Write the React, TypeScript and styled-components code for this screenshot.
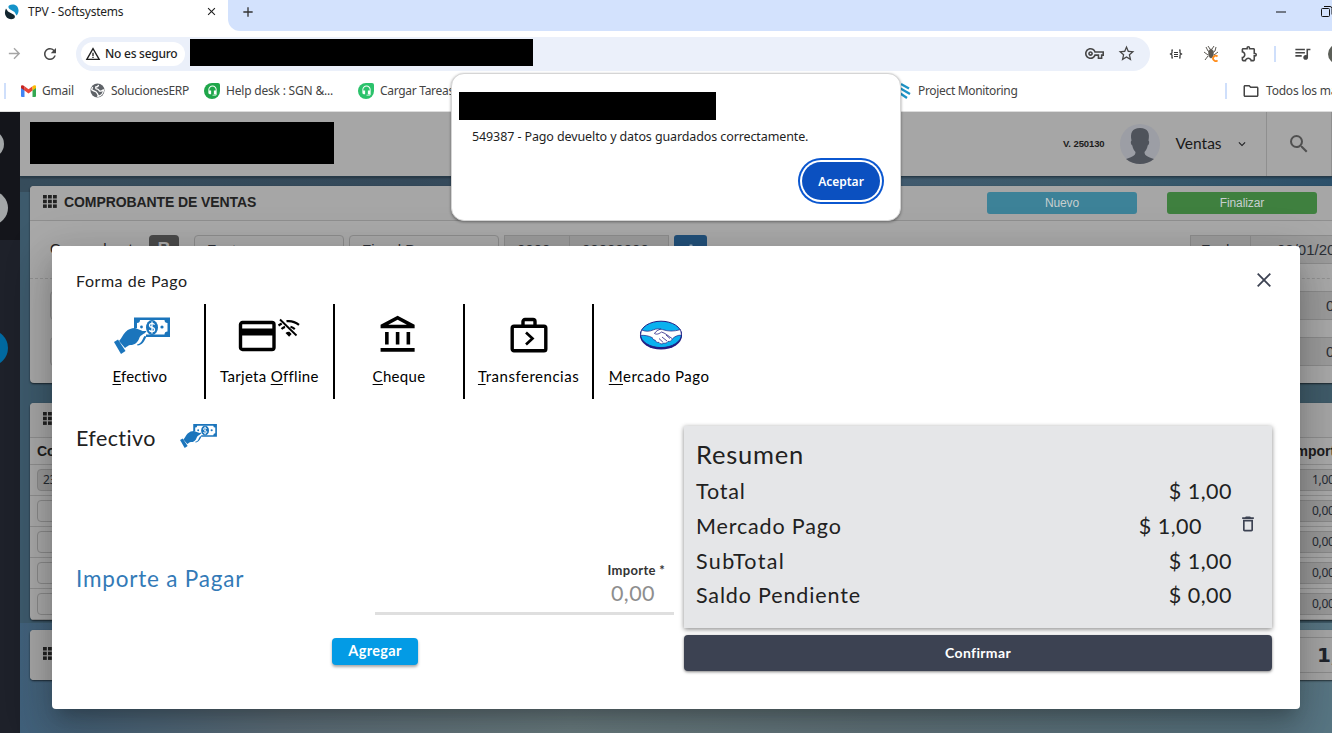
import React from 'react';
import styled, { createGlobalStyle } from 'styled-components';
import {
  MdOutlineAccountBalance,
  MdOutlineDelete,
  MdOutlineExtension,
  MdOutlineFolder,
  MdOutlineQueueMusic,
  MdOutlineVpnKey,
  MdStarBorder,
  MdSearch,
  MdRefresh,
  MdArrowForward,
  MdWarningAmber,
  MdAdd,
  MdClose,
  MdExpandMore,
  MdHeadsetMic,
  MdSettings,
} from 'react-icons/md';

const brand = '"Lato", sans-serif';
const system = '"Noto Sans", "Open Sans", sans-serif';
const classic = '"Liberation Sans", Arial, sans-serif';

const GlobalStyle = createGlobalStyle`
  * { box-sizing: border-box; }
  html, body { margin: 0; padding: 0; overflow: hidden; }
  body { font-family: ${classic}; color: #202124; }
  svg { display: block; flex: none; }
`;

const Screen = styled.div`
  position: relative;
  width: 1332px;
  height: 733px;
  overflow: hidden;
  display: flex;
  flex-direction: column;
  background: #fff;
`;

/* Browser chrome */
const TabStrip = styled.div`
  display: flex;
  height: 31px;
  flex: none;
`;
const ActiveTab = styled.div`
  width: 228px;
  display: flex;
  align-items: center;
  padding: 0 10px 8px 4px;
  font: 12px ${system};
  letter-spacing: -0.23px;
  color: #1f1f1f;
`;
const TabTitle = styled.span`
  margin-left: 8px;
  flex: 1;
`;
const StripRest = styled.div`
  flex: 1;
  background: #d3e2fd;
  border-radius: 0 0 0 12px;
  display: flex;
  align-items: center;
  padding: 0 0 8px 12px;
  color: #333;
`;
const WindowButtons = styled.div`
  display: flex;
  align-items: center;
  gap: 34px;
  margin-left: auto;
  margin-right: -2px;
`;
const Toolbar = styled.div`
  display: flex;
  align-items: center;
  height: 45px;
  flex: none;
  color: #474747;
`;
const NavIcon = styled.div<{ $w: number; $faded?: boolean }>`
  width: ${p => p.$w}px;
  flex: none;
  display: flex;
  justify-content: center;
  color: ${p => (p.$faded ? '#a5a5a5' : '#474747')};
`;
const AddressBar = styled.div`
  width: 1074px;
  height: 34px;
  margin-left: 4px;
  flex: none;
  border-radius: 17px;
  background: #ebf0fa;
  display: flex;
  align-items: center;
  padding: 0 14px 0 5px;
`;
const SecurityChip = styled.div`
  width: 104px;
  height: 24px;
  margin-right: 5px;
  border-radius: 12px;
  background: #fff;
  display: flex;
  align-items: center;
  gap: 4px;
  padding-left: 4px;
  font: 500 12px ${system};
  letter-spacing: -0.25px;
  color: #1f1f1f;
  white-space: nowrap;
  flex: none;
`;
const Redacted = styled.div<{ $w: number; $h: number; $lift?: number }>`
  width: ${p => p.$w}px;
  height: ${p => p.$h}px;
  margin-bottom: ${p => p.$lift ?? 0}px;
  background: #000;
  flex: none;
`;
const AddressActions = styled.div`
  margin-left: auto;
  display: flex;
  align-items: center;
  gap: 13px;
`;
const Extensions = styled.div`
  display: flex;
  align-items: center;
  padding-left: 17px;
`;
const Divider = styled.i<{ $after?: number }>`
  width: 2px;
  height: 16px;
  margin-right: ${p => p.$after ?? 0}px;
  background: #cfdffb;
  flex: none;
`;
const Bookmarks = styled.div`
  height: 36px;
  flex: none;
  display: flex;
  align-items: center;
  padding: 0 0 6px 4px;
  border-bottom: 1px solid #dcdcdc;
  font: 12px ${system};
  color: #444;
  white-space: nowrap;
`;
const Bookmark = styled.div<{ $w: number; $gap?: number; $ls?: number }>`
  width: ${p => p.$w}px;
  display: flex;
  align-items: center;
  gap: ${p => p.$gap ?? 6}px;
  letter-spacing: ${p => p.$ls ?? 0}px;
  flex: none;
`;
const Leaf = styled.div<{ $c: string }>`
  width: 16px;
  height: 16px;
  border-radius: 8px 2px 8px 8px;
  background: ${p => p.$c};
  color: #fff;
  display: flex;
  align-items: center;
  justify-content: center;
`;

/* Application, dimmed behind the dialog */
const AppArea = styled.div`
  display: flex;
  flex: 1;
  min-height: 0;
`;
const Sidebar = styled.div`
  width: 20px;
  background: linear-gradient(#14151b 0 128px, #1e212a 128px);
  overflow: hidden;
  display: flex;
  flex-direction: column;
  align-items: flex-end;
  flex: none;
`;
const SideBadge = styled.div<{ $size: number; $top: number; $right: number; $bg: string }>`
  width: ${p => p.$size}px;
  height: ${p => p.$size}px;
  margin: ${p => p.$top}px ${p => p.$right}px 0 0;
  border-radius: 50%;
  background: ${p => p.$bg};
  flex: none;
`;
const Main = styled.div`
  flex: 1;
  min-width: 0;
  overflow: hidden;
  background:
    linear-gradient(90deg, #364c5b 0%, #34495a 30%, #415a6e 66%, #3c5b6b 82%, #2c506a 100%) 0 0 / 100% 80px no-repeat,
    linear-gradient(90deg, #41617b 0%, #60727d 20%, #6d8084 42%, #64777e 65%, #587684 100%) 0 100% / 100% 110px no-repeat,
    linear-gradient(90deg, #3d5a6c, #405c6a);
`;
const AppHeader = styled.div`
  height: 65px;
  background: #a6a6a6;
  border-bottom: 1px solid #263a48;
  display: flex;
  align-items: center;
  padding-left: 10px;
  box-shadow: 0 1px 2px rgba(0, 0, 0, 0.3);
`;
const Version = styled.b`
  margin-left: 729px;
  font-size: 9.5px;
  letter-spacing: -0.1px;
  width: 58px;
  padding-bottom: 2px;
  color: #1c1c1c;
  white-space: nowrap;
`;
const UserName = styled.span`
  font: 15.5px ${brand};
  width: 61px;
  margin-left: 16px;
  padding-bottom: 2px;
  color: #191919;
`;
const SearchBox = styled.div`
  height: 64px;
  width: 66px;
  margin-left: 17px;
  border: solid #8f8f8f;
  border-width: 0 1px;
  display: flex;
  align-items: center;
  justify-content: center;
  color: #505050;
  flex: none;
`;
const Panels = styled.div`
  padding: 9px 0 0 10px;
  width: 1400px;
`;
const Panel = styled.section<{ $h: number; $gap: number }>`
  height: ${p => p.$h}px;
  margin-bottom: ${p => p.$gap}px;
  border-radius: 4px;
  background: #a9a9a9;
  box-shadow: 0 1px 2px rgba(0, 0, 0, 0.6);
  overflow: hidden;
`;
const PanelHead = styled.div<{ $h?: number }>`
  height: ${p => p.$h ?? 35}px;
  display: flex;
  align-items: center;
  padding: 0 0 3px 13px;
  background: #a6a6a6;
  border-bottom: ${p => (p.$h ? 0 : 1)}px solid #8f8f8f;
  font: bold 14px ${classic};
  letter-spacing: -0.09px;
  color: #222;
`;
const PanelTitle = styled.span`
  margin: 1px 0 0 7px;
  width: 923px;
`;
const PanelButton = styled.div<{ $bg: string }>`
  width: 150px;
  height: 22px;
  margin: 3px 30px 0 0;
  border-radius: 3px;
  background: ${p => p.$bg};
  color: #c7cfcf;
  font: 12px/22px ${classic};
  text-align: center;
`;
const FormRow = styled.div<{ $h: number; $top: number; $dash?: boolean }>`
  height: ${p => p.$h}px;
  padding: ${p => p.$top}px 0 0 20px;
  display: flex;
  align-items: flex-start;
  border-bottom: ${p => (p.$dash ? '1px dashed #929292' : '0')};
`;
const FormLabel = styled.span`
  width: 99px;
  font: 15px/28px ${classic};
  color: #222;
`;
const Letter = styled.div`
  width: 30px;
  height: 29px;
  margin-right: 15px;
  border-radius: 4px;
  background: #4a4a4a;
  color: #a9a9a9;
  font: bold 18px/29px ${classic};
  text-align: center;
`;
const Field = styled.div<{ $w: number; $ml?: number; $flat?: boolean; $pad?: number }>`
  width: ${p => p.$w}px;
  height: 29px;
  margin-left: ${p => p.$ml ?? 0}px;
  padding-left: ${p => p.$pad ?? 12}px;
  border: 1px solid #8c8c8c;
  border-radius: ${p => (p.$flat ? 0 : 4)}px;
  background: ${p => (p.$flat ? '#9c9c9c' : '#a8a8a8')};
  color: #2b2f36;
  font: 15px/28px ${classic};
  flex: none;
`;
const LookupButton = styled.div`
  width: 33px;
  height: 29px;
  margin-left: 5px;
  border-radius: 3px;
  background: #225079;
  color: #8fa4b5;
  display: flex;
  justify-content: center;
  padding-top: 8px;
`;
const ColumnHead = styled.div`
  height: 27px;
  display: flex;
  justify-content: space-between;
  padding: 0 77px 0 7px;
  border-bottom: 1px solid #8f8f8f;
  font: bold 14px/26px ${classic};
  color: #1d1d1d;
`;
const GridRow = styled.div`
  height: 31px;
  display: flex;
  justify-content: space-between;
  align-items: center;
  padding: 0 60px 0 7px;
  border-bottom: 1px solid #8f8f8f;
`;
const Cell = styled.div<{ $filled?: boolean; $pad: number }>`
  width: 160px;
  height: 22px;
  border: 1px solid #898989;
  border-radius: 4px;
  background: ${p => (p.$filled ? '#999' : '#a8a8a8')};
  padding-left: ${p => p.$pad}px;
  font: 12px/20px ${system};
  letter-spacing: -0.3px;
  color: #262b33;
`;
const TotalBox = styled.div`
  margin: 3px 0 0 1200px;
  width: 130px;
  height: 36px;
  flex: none;
  border: 1px solid #8c8c8c;
  padding-left: 59px;
  font: bold 20px/34px "DejaVu Sans", sans-serif;
  color: #20242c;
`;

/* Payment dialog */
const Modal = styled.div`
  position: absolute;
  left: 52px;
  top: 246px;
  width: 1248px;
  height: 463px;
  padding: 24px 28px 0 24px;
  background: #fff;
  border-radius: 4px;
  box-shadow: 0 11px 15px -7px rgba(0, 0, 0, 0.2), 0 24px 38px 3px rgba(0, 0, 0, 0.14),
    0 9px 46px 8px rgba(0, 0, 0, 0.12);
  font-family: ${brand};
  color: #212121;
`;
const ModalHead = styled.div`
  display: flex;
  justify-content: space-between;
  height: 34px;
  font-size: 16px;
  line-height: 22px;
  letter-spacing: 0.55px;
`;
const CloseIcon = styled.div`
  padding: 3px 1px 0 0;
  color: #3c4252;
`;
const Methods = styled.div`
  display: flex;
  height: 95px;
`;
const Method = styled.div`
  width: 129.6px;
  display: flex;
  flex-direction: column;
  align-items: center;
  border-right: 2px solid #000;
  color: #000;
  &:last-child { border-right: 0; }
`;
const MethodIcon = styled.div<{ $shift?: number }>`
  height: 62px;
  padding-left: ${p => p.$shift ?? 0}px;
  display: flex;
  align-items: center;
`;
const MethodLabel = styled.div<{ $ls: number }>`
  font-size: 15px;
  line-height: 20px;
  letter-spacing: ${p => p.$ls}px;
  white-space: nowrap;
  u { text-underline-offset: 2px; text-decoration-thickness: 1px; text-decoration-skip-ink: none; }
`;
const ModalBody = styled.div`
  display: flex;
  padding-top: 26px;
`;
const PayColumn = styled.div`
  width: 608px;
`;
const Chosen = styled.div`
  display: flex;
  align-items: center;
  gap: 24px;
  height: 25px;
  font-size: 21.5px;
  letter-spacing: 0.4px;
  svg { margin-bottom: 4px; }
`;
const AmountRow = styled.div`
  display: flex;
  margin-top: 112px;
  height: 53px;
`;
const AmountLabel = styled.div`
  width: 299px;
  padding-top: 4px;
  font-size: 22.5px;
  line-height: 26px;
  letter-spacing: 0.8px;
  color: #337ab7;
`;
const AmountField = styled.div`
  width: 299px;
  border-bottom: 3px solid #dfdfdf;
  display: flex;
  flex-direction: column;
  align-items: flex-end;
`;
const AmountCaption = styled.span`
  font: bold 13px/16px ${brand};
  letter-spacing: 0.3px;
  padding-right: 9px;
  color: #333;
`;
const AmountValue = styled.span`
  font-size: 21.5px;
  line-height: 28px;
  letter-spacing: 0.45px;
  padding: 1px 19px 0 0;
  color: #8e8e8e;
`;
const AddButton = styled.div`
  width: 86px;
  height: 27px;
  margin: 23px 0 0 256px;
  border-radius: 4px;
  background: #039be5;
  color: #fff;
  font: bold 14.5px/26px ${brand};
  letter-spacing: 0.35px;
  text-align: center;
  box-shadow: 0 2px 3px rgba(0, 0, 0, 0.35);
`;
const SummaryColumn = styled.div`
  width: 588px;
`;
const Summary = styled.div`
  height: 202px;
  margin-top: 1px;
  padding: 11px 40px 0 12px;
  background: #e5e6e8;
  box-shadow: 0 2px 5px rgba(0, 0, 0, 0.35), 0 0 4px rgba(0, 0, 0, 0.15);
`;
const SummaryTitle = styled.div`
  font-size: 25.5px;
  line-height: 34px;
  height: 37px;
  letter-spacing: 0.8px;
`;
const SummaryRow = styled.div`
  height: 34.7px;
  display: flex;
  align-items: center;
  justify-content: space-between;
  font-size: 21.5px;
  letter-spacing: 0.5px;
`;
const SummaryLabel = styled.span<{ $ls?: number }>`
  letter-spacing: ${p => p.$ls ?? 0.85}px;
`;
const Removable = styled.span`
  display: flex;
  align-items: center;
  gap: 36px;
  margin-right: -26px;
  svg { color: #3c4252; margin-bottom: 4px; }
`;
const ConfirmButton = styled.div`
  height: 36px;
  margin-top: 7px;
  border-radius: 4px;
  background: #3c4252;
  color: #fff;
  font: bold 14px/35px ${brand};
  letter-spacing: 0.35px;
  text-align: center;
  box-shadow: 0 1px 3px rgba(0, 0, 0, 0.5);
`;

/* Browser alert */
const Alert = styled.div`
  position: absolute;
  left: 451px;
  top: 73px;
  width: 450px;
  height: 148px;
  padding: 18px 20px 0 7px;
  border: 1px solid #d5d5d5;
  border-radius: 13px;
  background: #fff;
  box-shadow: 0 1px 3px rgba(0, 0, 0, 0.4);
  display: flex;
  flex-direction: column;
`;
const AlertText = styled.div`
  padding: 8px 0 0 13px;
  font: 12.5px/18px ${system};
  letter-spacing: -0.11px;
  color: #1f1f1f;
  white-space: nowrap;
`;
const AcceptButton = styled.div`
  align-self: flex-end;
  width: 78px;
  height: 38px;
  margin-top: 16px;
  border-radius: 19px;
  background: #0b50c0;
  color: #fff;
  font: 600 12px/39px ${system};
  text-align: center;
  box-shadow: 0 0 0 2px #fff, 0 0 0 4px #0b57d0;
`;

const CashHand = ({ width, height }: { width: number; height: number }) => (
  <svg width={width} height={height} viewBox="0 0 56 38" fill="#1b75bc">
    <path fillRule="evenodd" d="M20 1.500h36v19.500H32V18.500h18.500a3 3 0 0 1 3-3V7a3 3 0 0 1-3-3H26a3 3 0 0 1-3 3v5l-3 1z" />
    <circle cx="27.500" cy="11" r="1.400" />
    <circle cx="48" cy="11" r="1.600" />
    <ellipse cx="38" cy="11.500" rx="6" ry="7.500" />
    <path d="M40.500 8.800c-.5-1-1.300-1.400-2.500-1.400-3.400 0-3.200 3.500 0 4 3.400.6 3.300 4.200 0 4.200-1.300 0-2.200-.5-2.700-1.500M38 5.500v12" fill="none" stroke="#fff" strokeWidth="1.300" />
    <path d="M5 25c3-3 3.500-6 6.500-9 3-3 6-4 9.500-4l6.500 2.500c2 1.500 4-.5 5 1-2 2.500-6 3.500-7 6-1.500 5-5 7.500-9 7.500-2 0-4 2-5.500 3z" />
    <path d="M23 28.500c5-1 5-5 7.500-8.500l2 .5c-2.500 5-4 8.500-9 9z" />
    <path d="M0 26l4-2.500 7.500 11.500-4.500 3z" />
  </svg>
);

const CardOffline = () => (
  <svg width="62" height="34" viewBox="0 0 62 34" fill="none" stroke="#000">
    <rect x="2.500" y="4.500" width="33.500" height="27" rx="2" strokeWidth="3.400" />
    <path d="M1.500 14h35" strokeWidth="7" />
    <path d="M42 1.500l16.500 16" strokeWidth="1.800" />
    <path d="M48.500 3.200c4.500-.6 8.700.6 12.500 3.600M40.500 7.500l3.200-2M43.500 11c1-.9 2.200-1.700 3.500-2.100M52.500 8.800c1.600.4 3 1.200 4.300 2.300" strokeWidth="2.200" />
    <path d="M47.500 15c1.400-1.100 2.700-1.400 4.200-1.100l1.900 2-2.500 2.800z" fill="#000" stroke="none" />
  </svg>
);

const TransferCase = () => (
  <svg width="38" height="36" viewBox="0 0 38 36" fill="none" stroke="#000" strokeWidth="3.400">
    <rect x="2.200" y="9.200" width="33.600" height="24.600" rx="1.800" />
    <path d="M13 9V4.500a2 2 0 0 1 2-2h8a2 2 0 0 1 2 2V9" />
    <path d="M16 15.500l6.500 6-6.500 6" strokeWidth="2.700" />
  </svg>
);

const Handshake = () => (
  <svg width="44" height="30" viewBox="0 0 44 30">
    <ellipse cx="22" cy="15.800" rx="21" ry="13.700" fill="#211c82" />
    <ellipse cx="22" cy="14.400" rx="20.500" ry="13.200" fill="#0ab1ef" stroke="#211c82" strokeWidth="1" />
    <path d="M2.500 10c4.500 1.800 8 1.600 12-.2 3-1.300 6-1.200 9-.2 6 1.900 11 2 18 0l1 5.500c-4 0-6.500 1.400-9 3.600-1 2.500-3 3-4.500 2.700-1 1.700-2.800 2.200-4.200 1.700-1.800 1.400-4 .9-4.800-.7-2.500.3-3.500-1-3.700-2.200-2-.2-2.800-1.300-2.800-2.400C9.500 15.500 6 15.300 1.500 15.300z" fill="#fff" stroke="#211c82" strokeWidth=".7" />
    <path d="M22 9c-3 1-5 2-6.500 4.500 2.500 1.500 5 0 7-1.500 3.500 1 7 4 10.500 6.500M23 17l5 4M20 18.500l4 3.800M27 15l4 3.500" fill="none" stroke="#211c82" strokeWidth=".8" />
  </svg>
);

const SoftMark = () => (
  <svg width="16" height="16" viewBox="0 0 16 16">
    <path d="M5 1.500C8-.5 14 0 14.500 6c.2 2-.5 4-2 5.500L10.500 8 5.500 5C4.300 4 4 2.500 5 1.500z" fill="#1593c9" />
    <path d="M2 4.500L4 7.500l5.500 3c1.800 1.200 1.800 3 .5 4C6 16.500 1.500 14 1 9.500.8 7.500 1.200 6 2 4.500z" fill="#13262f" />
  </svg>
);

const Globe = () => (
  <svg width="15" height="15" viewBox="0 0 15 15">
    <circle cx="7.500" cy="7.500" r="7" fill="#5f6368" />
    <path d="M8.500 1.800c-.3 1.800-1 2.200-2.700 2.200-.3 1.500.2 2 1.700 2.200 1.800.3 1.200 2 3 2 1.200 0 1.500-1.200 3-1.200-.2 2.800-2.300 5.800-5.500 6.300.6-1.700-.6-2.300-1-3.300-.5-1.600-2.500-1.200-5.300-3.200.2-1 .5-1.800 1-2.600" fill="none" stroke="#fff" strokeWidth="1.300" />
  </svg>
);

const Gmail = () => (
  <svg width="15" height="12" viewBox="0 0 15 12">
    <path d="M0 1.500l3.500 2.600V12H1a1 1 0 0 1-1-1z" fill="#4285f4" />
    <path d="M15 1.500l-3.500 2.600V12H14a1 1 0 0 0 1-1z" fill="#34a853" />
    <path d="M3.500 1.200l4 3 4-3v4.300l-4 3-4-3z" fill="#ea4335" />
    <path d="M0 3V1.500C0 .2 1.500-.5 3.500 1.200v4.300z" fill="#c5221f" />
    <path d="M15 3V1.500c0-1.300-1.500-2-3.500-.3v4.300z" fill="#fbbc04" />
  </svg>
);

const MonitorMark = () => (
  <svg width="14" height="16" viewBox="0 0 14 16" fill="none" stroke="#1e93c6" strokeWidth="2.300">
    <path d="M4 1l8 4.500M1 4l12 7M2 9.500l8 5.500" />
  </svg>
);

const GridGlyph = () => (
  <svg width="14" height="13" viewBox="0 0 14 13" fill="#222">
    {[0, 5, 10].map(x => [0, 4.7, 9.4].map(y => <rect key={`${x}-${y}`} x={x} y={y} width="3.800" height="3.500" />))}
  </svg>
);

const Avatar = () => (
  <svg width="40" height="40" viewBox="0 0 40 40">
    <circle cx="20" cy="20" r="20" fill="#9c9ea5" />
    <path d="M11.500 16.500C10 9 12 4 20 4s10 5 8.500 12.500c1.200 1 .8 4-.8 5-.5 3-1.700 5-3.200 6.500 0 4 3 4.500 9.500 7-4 3.500-9 5-14 5s-10-1.500-14-5c6.500-2.500 9.500-3 9.500-7-1.500-1.500-2.700-3.500-3.200-6.500-1.600-1-2-4-.8-5z" fill="#4f535b" />
  </svg>
);

const amounts = ['1,00', '0,00', '0,00', '0,00', '0,00'];

export default function App() {
  return (
    <>
      <GlobalStyle />
      <Screen>
        <TabStrip>
          <ActiveTab>
            <SoftMark />
            <TabTitle>TPV - Softsystems</TabTitle>
            <MdClose size={13} />
          </ActiveTab>
          <StripRest>
            <MdAdd size={16} />
            <WindowButtons>
              <svg width="12" height="2"><path d="M1 1h10" stroke="#111" /></svg>
              <svg width="13" height="11" fill="none" stroke="#111"><rect x=".5" y="2.500" width="8" height="8" rx="1" /><path d="M3 .5h6a2 2 0 0 1 2 2v6" /></svg>
            </WindowButtons>
          </StripRest>
        </TabStrip>

        <Toolbar>
          <NavIcon $w={28} $faded><MdArrowForward size={17} /></NavIcon>
          <NavIcon $w={44}><MdRefresh size={18} /></NavIcon>
          <AddressBar>
            <SecurityChip><MdWarningAmber size={16} />No es seguro</SecurityChip>
            <Redacted $w={343} $h={27} $lift={2} />
            <AddressActions><MdOutlineVpnKey size={19} /><MdStarBorder size={19} /></AddressActions>
          </AddressBar>
          <Extensions>
            <NavIcon $w={18}>
              <svg width="14" height="10" fill="none" stroke="#333" strokeWidth="1.200">
                <path d="M4 1H3v3L1.500 5 3 6v3h1M10 1h1v3l1.500 1L11 6v3h-1M5 3.500h4M5 5.500h4M5 7.500h4" />
              </svg>
            </NavIcon>
            <NavIcon $w={54}>
              <svg width="16" height="16" viewBox="0 0 16 16" fill="none" stroke="#5b5852">
                <path d="M2 1l2 4 3 2M12 1l-1 4-3 2M0 6l4 3M14 6l-4 3M1 14l3-4M4 0l2 3M10 0L8 3" />
                <ellipse cx="7" cy="7.500" rx="2.200" ry="4.300" fill="#5b5852" />
                <path d="M13.500 10.500a2.600 2.600 0 1 0 0 3.800" stroke="#ff8c1a" strokeWidth="1.800" />
              </svg>
            </NavIcon>
            <NavIcon $w={20}><MdOutlineExtension size={19} /></NavIcon>
            <NavIcon $w={32}><Divider /></NavIcon>
            <NavIcon $w={22}><MdOutlineQueueMusic size={19} /></NavIcon>
            <NavIcon $w={50}>
              <svg width="20" height="20"><circle cx="10" cy="10" r="10" fill="#5c5f58" /></svg>
            </NavIcon>
          </Extensions>
        </Toolbar>

        <Bookmarks>
          <Divider $after={15} />
          <Bookmark $w={69} $ls={-0.2}><Gmail />Gmail</Bookmark>
          <Bookmark $w={114} $gap={6} $ls={-0.3}><Globe />SolucionesERP</Bookmark>
          <Bookmark $w={154} $ls={-0.2}><Leaf $c="#1fa64a"><MdHeadsetMic size={11} /></Leaf>Help desk : SGN &amp;...</Bookmark>
          <Bookmark $w={539} $ls={-0.3}><Leaf $c="#2bc26b"><MdHeadsetMic size={11} /></Leaf>Cargar Tareas</Bookmark>
          <Bookmark $w={328} $gap={7} $ls={-0.33}><MonitorMark />Project Monitoring</Bookmark>
          <Divider $after={15} />
          <Bookmark $w={100} $ls={-0.2}><MdOutlineFolder size={18} />Todos los marcadores</Bookmark>
        </Bookmarks>

        <AppArea>
          <Sidebar>
            <SideBadge $size={28} $top={18} $right={16} $bg="radial-gradient(#226f8c 45%, #a3a6a8 50%)" />
            <SideBadge $size={34} $top={33} $right={12} $bg="#a3a6a8" />
            <SideBadge $size={36} $top={105} $right={12} $bg="#0069a0" />
          </Sidebar>
          <Main>
            <AppHeader>
              <Redacted $w={304} $h={42} $lift={2} />
              <Version>V. 250130</Version>
              <Avatar />
              <UserName>Ventas</UserName>
              <MdExpandMore size={14} />
              <SearchBox><MdSearch size={24} /></SearchBox>
            </AppHeader>
            <Panels>
              <Panel $h={197} $gap={20}>
                <PanelHead>
                  <GridGlyph />
                  <PanelTitle>COMPROBANTE DE VENTAS</PanelTitle>
                  <PanelButton $bg="#3d8298">Nuevo</PanelButton>
                  <PanelButton $bg="#3f803f">Finalizar</PanelButton>
                </PanelHead>
                <FormRow $h={58} $top={14} $dash>
                  <FormLabel>Comprobante</FormLabel>
                  <Letter>B</Letter>
                  <Field $w={150}>Factura</Field>
                  <Field $w={150} $ml={5}>Fiscal B</Field>
                  <Field $w={66} $ml={5} $flat>0000</Field>
                  <Field $w={100} $ml={-1} $flat>00000000</Field>
                  <LookupButton><MdSettings size={14} /></LookupButton>
                  <Field $w={61} $ml={483} $flat $pad={10}>Fecha</Field>
                  <Field $w={130} $ml={-1} $flat $pad={26}>08/01/2025</Field>
                </FormRow>
                <FormRow $h={46} $top={12}>
                  <Field $w={200} />
                  <Field $w={290} $ml={860} $flat $pad={215}>0,00</Field>
                </FormRow>
                <FormRow $h={46} $top={12}>
                  <Field $w={200} />
                  <Field $w={290} $ml={860} $flat $pad={215}>0,00</Field>
                </FormRow>
              </Panel>

              <Panel $h={217} $gap={10}>
                <PanelHead><GridGlyph /></PanelHead>
                <ColumnHead><span>Cod.</span><span>Importe</span></ColumnHead>
                {amounts.map((amount, i) => (
                  <GridRow key={i}>
                    <Cell $filled={i === 0} $pad={5}>{i === 0 ? '231' : ''}</Cell>
                    <Cell $filled $pad={111}>{amount}</Cell>
                  </GridRow>
                ))}
              </Panel>

              <Panel $h={50} $gap={0}>
                <PanelHead $h={50}>
                  <GridGlyph />
                  <TotalBox>1,00</TotalBox>
                </PanelHead>
              </Panel>
            </Panels>
          </Main>
        </AppArea>

        <Modal>
          <ModalHead>
            <span>Forma de Pago</span>
            <CloseIcon>
              <svg width="14" height="14" stroke="currentColor" strokeWidth="1.800"><path d="M.7.7l12.600 12.600M13.300.7L.7 13.300" /></svg>
            </CloseIcon>
          </ModalHead>
          <Methods>
            <Method>
              <MethodIcon $shift={5}><CashHand width={56} height={38} /></MethodIcon>
              <MethodLabel $ls={0.15}><u>E</u>fectivo</MethodLabel>
            </Method>
            <Method>
              <MethodIcon><CardOffline /></MethodIcon>
              <MethodLabel $ls={0.3}>Tarjeta <u>O</u>ffline</MethodLabel>
            </Method>
            <Method>
              <MethodIcon><MdOutlineAccountBalance size={43} /></MethodIcon>
              <MethodLabel $ls={0.3}><u>C</u>heque</MethodLabel>
            </Method>
            <Method>
              <MethodIcon><TransferCase /></MethodIcon>
              <MethodLabel $ls={0.52}><u>T</u>ransferencias</MethodLabel>
            </Method>
            <Method>
              <MethodIcon $shift={3}><Handshake /></MethodIcon>
              <MethodLabel $ls={0.52}><u>M</u>ercado Pago</MethodLabel>
            </Method>
          </Methods>
          <ModalBody>
            <PayColumn>
              <Chosen>Efectivo<CashHand width={37} height={25} /></Chosen>
              <AmountRow>
                <AmountLabel>Importe a Pagar</AmountLabel>
                <AmountField>
                  <AmountCaption>Importe *</AmountCaption>
                  <AmountValue>0,00</AmountValue>
                </AmountField>
              </AmountRow>
              <AddButton>Agregar</AddButton>
            </PayColumn>
            <SummaryColumn>
              <Summary>
                <SummaryTitle>Resumen</SummaryTitle>
                <SummaryRow><SummaryLabel>Total</SummaryLabel><span>$ 1,00</span></SummaryRow>
                <SummaryRow>
                  <SummaryLabel>Mercado Pago</SummaryLabel>
                  <Removable>$ 1,00<MdOutlineDelete size={20} /></Removable>
                </SummaryRow>
                <SummaryRow><SummaryLabel $ls={1.35}>SubTotal</SummaryLabel><span>$ 1,00</span></SummaryRow>
                <SummaryRow><SummaryLabel>Saldo Pendiente</SummaryLabel><span>$ 0,00</span></SummaryRow>
              </Summary>
              <ConfirmButton>Confirmar</ConfirmButton>
            </SummaryColumn>
          </ModalBody>
        </Modal>

        <Alert>
          <Redacted $w={257} $h={28} />
          <AlertText>549387 - Pago devuelto y datos guardados correctamente.</AlertText>
          <AcceptButton>Aceptar</AcceptButton>
        </Alert>
      </Screen>
    </>
  );
}
